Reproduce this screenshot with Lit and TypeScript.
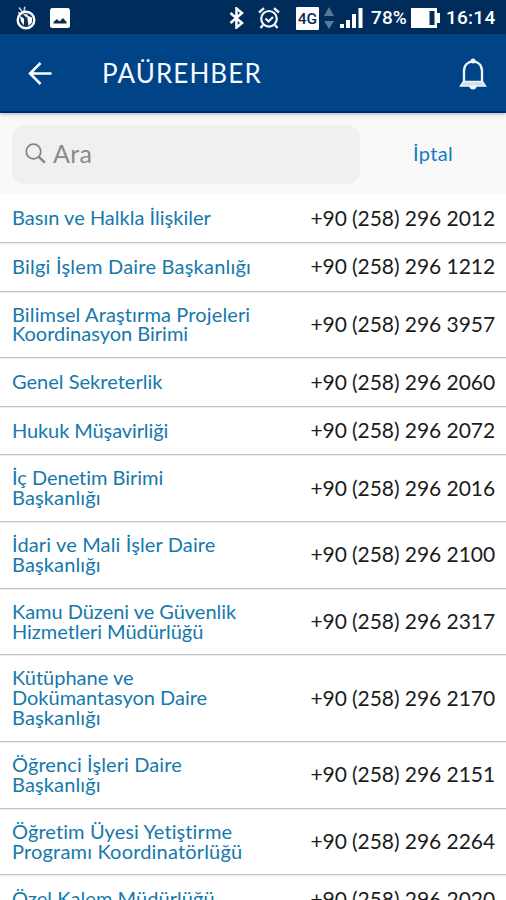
import { LitElement, html, css } from "lit";
import { customElement } from "lit/decorators.js";
import { styleMap } from "lit/directives/style-map.js";

/** A line of a unit's name and its tracking in pixels. */
type Line = [text: string, tracking: number];

interface Unit {
  lines: Line[];
  phone: string;
}

const UNITS: Unit[] = [
  { lines: [["Basın ve Halkla İlişkiler", 0.02]], phone: "2012" },
  { lines: [["Bilgi İşlem Daire Başkanlığı", 0.22]], phone: "1212" },
  { lines: [["Bilimsel Araştırma Projeleri", 0.13], ["Koordinasyon Birimi", 0]], phone: "3957" },
  { lines: [["Genel Sekreterlik", 0.02]], phone: "2060" },
  { lines: [["Hukuk Müşavirliği", -0.1]], phone: "2072" },
  { lines: [["İç Denetim Birimi", -0.02], ["Başkanlığı", 0.14]], phone: "2016" },
  { lines: [["İdari ve Mali İşler Daire", 0.14], ["Başkanlığı", 0.14]], phone: "2100" },
  { lines: [["Kamu Düzeni ve Güvenlik", -0.03], ["Hizmetleri Müdürlüğü", -0.04]], phone: "2317" },
  { lines: [["Kütüphane ve", 0], ["Dokümantasyon Daire", -0.02], ["Başkanlığı", 0.14]], phone: "2170" },
  { lines: [["Öğrenci İşleri Daire", 0.1], ["Başkanlığı", 0.14]], phone: "2151" },
  { lines: [["Öğretim Üyesi Yetiştirme", 0.1], ["Programı Koordinatörlüğü", 0.18]], phone: "2264" },
  { lines: [["Özel Kalem Müdürlüğü", 0.05]], phone: "2020" },
];

@customElement("app-root")
export class AppRoot extends LitElement {
  static styles = css`
    :host {
      display: flex;
      flex-direction: column;
      height: 900px;
      overflow: hidden;
      background: #fff;
      font-family: Lato, "Open Sans", sans-serif;
      font-variant-ligatures: none;
    }
    svg { display: block; flex: none; }
    .status {
      flex: none;
      height: 34px;
      box-sizing: border-box;
      padding: 2px 10px 0 15px;
      background: #002c5b;
      color: #fff;
      display: flex;
      align-items: center;
      font: 500 19px/32px Roboto, sans-serif;
    }
    .gap { flex: 1; }
    .photo { margin-left: 14px; }
    .alarm { margin-left: 14px; }
    .net { margin-left: 16px; }
    .arrows { margin-left: 5px; }
    .signal { margin-left: 6px; }
    .pct { margin-left: 8px; width: 38px; white-space: nowrap; letter-spacing: 0.1px; }
    .batt { margin-left: 2px; }
    .clock { margin-left: 6px; width: 50px; white-space: nowrap; letter-spacing: 0.25px; }
    .bar {
      flex: none;
      height: 79px;
      box-sizing: border-box;
      padding: 0 19px 0 28px;
      background: #004387;
      border-bottom: 2px solid #002879;
      color: #f4f9ff;
      display: flex;
      align-items: center;
      box-shadow: 0 1px 4px rgba(0, 0, 0, 0.3);
      z-index: 1;
    }
    .title { margin-left: 49px; font-size: 26px; line-height: 32px; letter-spacing: 1.1px; }
    .search {
      flex: none;
      height: 81px;
      box-sizing: border-box;
      padding: 12px 0 10px 12px;
      background: #f9f9f9;
      display: flex;
    }
    .field {
      width: 348px;
      height: 59px;
      box-sizing: border-box;
      padding: 0 0 3px 13px;
      border-radius: 13px;
      background: #f0f0f0;
      color: #8a8a8a;
      display: flex;
      align-items: center;
      font-size: 25px;
    }
    .hint { margin-left: 7px; letter-spacing: 0.3px; }
    .cancel {
      flex: 1;
      display: flex;
      align-items: center;
      justify-content: center;
      height: 56px;
      color: #1679c2;
      font-size: 20px;
      letter-spacing: 0.3px;
    }
    .list {
      flex: none;
      padding-top: 0.5px;
    }
    .row {
      box-sizing: border-box;
      min-height: 48.55px;
      padding: 13px 11px 13px 12px;
      border-bottom: 1px solid #c4c4c4;
      box-shadow: 0 1px 0 #ececec;
      display: flex;
      align-items: center;
      justify-content: space-between;
    }
    .name {
      color: #1579ab;
      font-size: 20px;
      line-height: 19.85px;
      white-space: nowrap;
    }
    .phone {
      color: #1c1c1c;
      font-size: 21px;
      line-height: 20px;
      padding-bottom: 1px;
      letter-spacing: -0.06px;
      white-space: nowrap;
    }
  `;

  private statusBar() {
    return html`<div class="status">
      <svg width="21" height="24" viewBox="0 0 21 24">
        <path d="M4 1.500 7.500 6M10 .8 9 5M3 6.500l3 1" stroke="#b9c8da" stroke-width="1.600" fill="none" />
        <circle cx="11" cy="14" r="8.300" fill="#10335d" stroke="#fff" stroke-width="2.400" />
        <path d="m5 10 4 2.500v7l-3-4zM12 9.500l5 2v5L13.500 20z" fill="#fff" />
        <path d="m8 8 5 .5-1.500 3z" fill="#fff" />
      </svg>
      <svg class="photo" width="20" height="20" viewBox="0 0 20 20">
        <rect width="20" height="20" rx="2.500" fill="#fff" />
        <path d="M3.500 15.500V14L7 11l2.500 2.500L13 10l3.500 4v1.500z" fill="#0a2b55" />
      </svg>
      <span class="gap"></span>
      <svg width="15" height="22" viewBox="0 0 15 22">
        <path d="M1.500 6 13 16l-5.500 4.500v-19L13 6 1.500 16" fill="none" stroke="#fff" stroke-width="2.500" />
      </svg>
      <svg class="alarm" width="22" height="22" viewBox="0 0 22 22" fill="none" stroke="#f2f6fb">
        <circle cx="11" cy="11.800" r="7.800" stroke-width="2.200" />
        <path d="M1 5.500 6 1.200M21 5.500 16 1.200M5 18l-2.500 3M17 18l2.500 3" stroke-width="2.400" />
        <path d="m7.500 11.500 3 3 4.500-4.500" stroke-width="2.200" />
      </svg>
      <svg class="net" width="23" height="23" viewBox="0 0 23 23">
        <rect width="23" height="23" rx="1" fill="#fff" />
        <text x="11.500" y="17" text-anchor="middle" font-family="Roboto, sans-serif" font-weight="500" font-size="15.500" fill="#0a2b55">4G</text>
      </svg>
      <svg class="arrows" width="10" height="22" viewBox="0 0 10 22" fill="#5c7797">
        <path d="m5 0 5 9H0zM5 22l5-8H0z" />
      </svg>
      <svg class="signal" width="23" height="22" viewBox="0 0 23 22" fill="#fff">
        <path d="M0 17h4v4H0zM6 13h4v8H6zM12 7h4v14h-4zM18.500 1h4v20h-4z" />
      </svg>
      <span class="pct">78%</span>
      <svg class="batt" width="29" height="20" viewBox="0 0 29 20">
        <path d="M0 0h26v5h3v10h-3v5H0z" fill="#fff" />
        <path d="M18.500 3h5v14h-5z" fill="#0a2b55" />
      </svg>
      <span class="clock">16:14</span>
    </div>`;
  }

  render() {
    return html`
      ${this.statusBar()}
      <div class="bar">
        <svg width="25" height="24" viewBox="0 0 25 24" fill="none" stroke="#fff" stroke-width="2.500">
          <path d="M23.500 12.500H3M12.500 2 2 12.500 12.500 23" />
        </svg>
        <span class="title">PAÜREHBER</span>
        <span class="gap"></span>
        <svg width="28" height="34" viewBox="0 0 28 34">
          <path d="M10 30h8q-1 3.500-4 3.500T10 30z" fill="#edf4f8" />
          <path d="M5 25V15C5 9 9 5.500 14 5.500S23 9 23 15v10" fill="none" stroke="#edf4f8" stroke-width="2.300" />
          <circle cx="14" cy="5" r="2.500" fill="#edf4f8" />
          <path d="M4.500 25.500h19L26.500 30h-25z" fill="#d3dfe5" stroke="#edf4f8" stroke-width="1.500" />
        </svg>
      </div>
      <div class="search">
        <div class="field">
          <svg width="21" height="21" viewBox="0 0 21 21" fill="none" stroke="#858585">
            <circle cx="8.500" cy="8.500" r="7.300" stroke-width="1.700" />
            <path d="m13.800 13.800 6 5.800" stroke-width="2.400" />
          </svg>
          <span class="hint">Ara</span>
        </div>
        <div class="cancel">İptal</div>
      </div>
      <div class="list">
        ${UNITS.map(
          (u) => html`<div class="row">
            <div class="name">
              ${u.lines.map(
                ([text, tracking]) =>
                  html`<div style=${styleMap({ letterSpacing: `${tracking}px` })}>${text}</div>`
              )}
            </div>
            <div class="phone">+90 (258) 296 ${u.phone}</div>
          </div>`
        )}
      </div>
    `;
  }
}
